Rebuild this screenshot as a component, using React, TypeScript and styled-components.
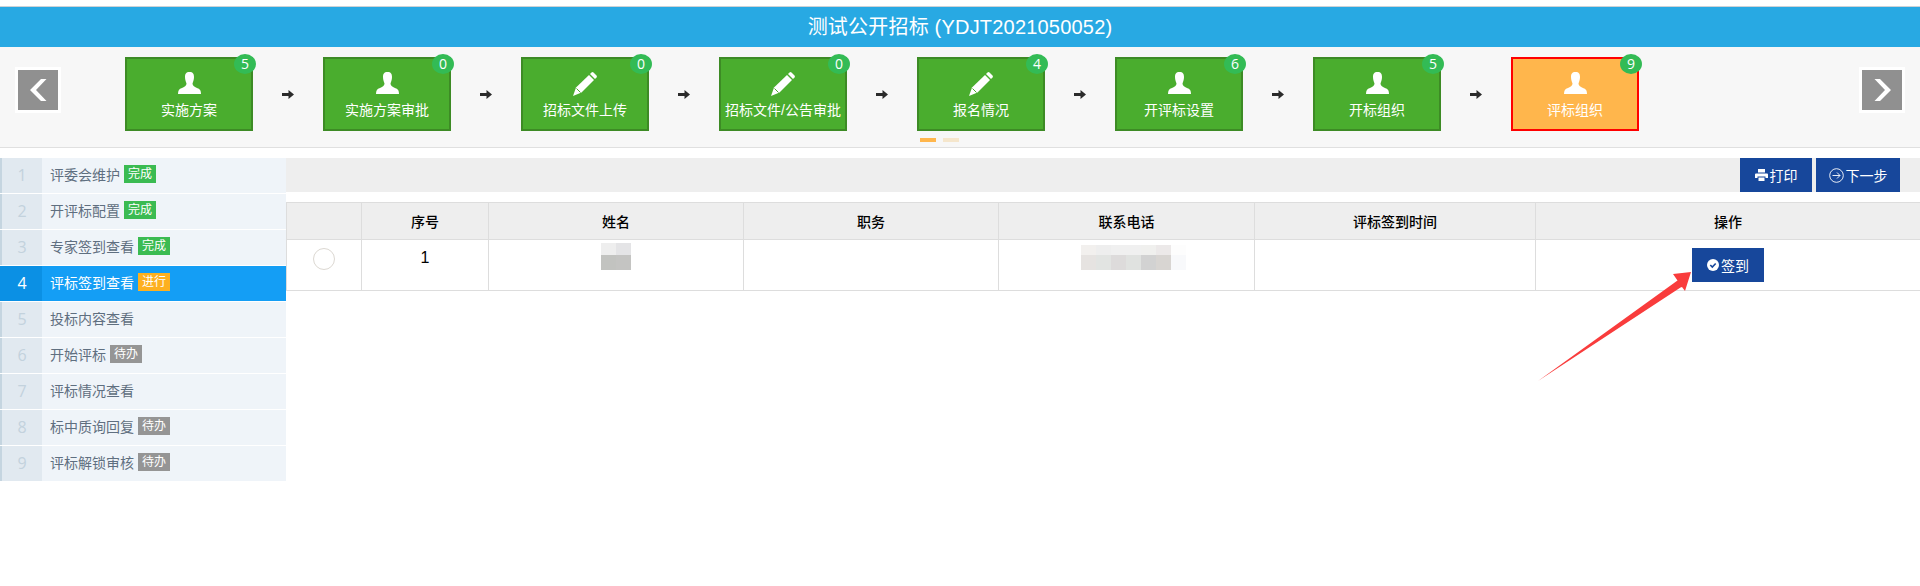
import styled, { createGlobalStyle } from 'styled-components';

const GlobalStyle = createGlobalStyle`
  html, body {
    margin: 0;
    padding: 0;
    background: #fff;
    font-family: "Liberation Sans", "Noto Sans CJK SC", sans-serif;
    font-size: 14px;
    color: #000;
  }
`;

const steps = [
  { name: '实施方案', count: 5, icon: 'user' },
  { name: '实施方案审批', count: 0, icon: 'user' },
  { name: '招标文件上传', count: 0, icon: 'pencil' },
  { name: '招标文件/公告审批', count: 0, icon: 'pencil' },
  { name: '报名情况', count: 4, icon: 'pencil' },
  { name: '开评标设置', count: 6, icon: 'user' },
  { name: '开标组织', count: 5, icon: 'user' },
  { name: '评标组织', count: 9, icon: 'user', current: true },
];

const menu = [
  { name: '评委会维护', tag: '完成', state: 'done' },
  { name: '开评标配置', tag: '完成', state: 'done' },
  { name: '专家签到查看', tag: '完成', state: 'done' },
  { name: '评标签到查看', tag: '进行', state: 'doing', active: true },
  { name: '投标内容查看' },
  { name: '开始评标', tag: '待办', state: 'todo' },
  { name: '评标情况查看' },
  { name: '标中质询回复', tag: '待办', state: 'todo' },
  { name: '评标解锁审核', tag: '待办', state: 'todo' },
];

const tagColors = { done: '#3bbb52', doing: '#fdb01f', todo: '#959595' };

const columns = [
  { title: '', width: 75 },
  { title: '序号', width: 127 },
  { title: '姓名', width: 255 },
  { title: '职务', width: 255 },
  { title: '联系电话', width: 256 },
  { title: '评标签到时间', width: 281 },
  { title: '操作', width: 385 },
];

const nameBlur = ['#eeeeee', '#e4e4e6', '#c2c3c0', '#c4c4c2'];
const phoneBlur = [
  '#f2f0ee', '#eeeeee', '#f0f0f0', '#f0f0f0', '#f0f0ee', '#ece9e9', '#fdfdfd',
  '#e6e3e1', '#e2e4e2', '#dddbdb', '#e0e2e0', '#d2d2d2', '#d8d5d2', '#f8f9fb',
];

const UserIcon = () => (
  <svg width="23" height="22" viewBox="0 0 23 22">
    <path
      fill="#fff"
      d="M11.5 0C8 0 7 2 7 5c0 3 1 5 1.5 6.5 0 2-1.5 3-4.5 4.500C1 17 0 18.500 0 22h23c0-3.500-1-5-4-6-3-1.500-4.500-2.500-4.500-4.500C15 10 16 8 16 5c0-3-1-5-4.500-5z"
    />
  </svg>
);

const PencilIcon = () => (
  <svg width="24" height="24" viewBox="0 0 24 24">
    <path fill="#fff" d="M0 24l3-8.500L16 3l5 5L8.500 20.500z" />
    <path fill="#fff" d="M17 2l1.500-1.500q1-.8 2 0l3 3q.8 1 0 2L22 7z" />
    <path stroke="#4aad2e" strokeWidth="1" fill="none" d="M3.500 16.500l4 4" />
  </svg>
);

const SmallArrow = () => (
  <svg width="12" height="9" viewBox="0 0 12 9">
    <path fill="#2b2b2b" d="M0 3h6.500V0L12 4.500 6.500 9V6H0z" />
  </svg>
);

const LeftChevron = () => (
  <svg width="17" height="22" viewBox="0 0 17 22">
    <path fill="#fff" d="M0 11L11 0h5.500L6 11l10.500 11H11z" />
  </svg>
);

const RightChevron = () => (
  <svg width="17" height="22" viewBox="0 0 17 22">
    <path fill="#fff" d="M17 11L6 0H.5L11 11 .5 22H6z" />
  </svg>
);

const PrintIcon = () => (
  <svg width="13" height="12" viewBox="0 0 13 12">
    <path fill="#fff" d="M3 0h7v3.500H3zM1 4.500h11q1 0 1 1V9h-2.500V7.500h-8V9H0V5.500q0-1 1-1zM3.500 8.500h6V12h-6z" />
  </svg>
);

const NextIcon = () => (
  <svg width="15" height="15" viewBox="0 0 15 15" fill="none" stroke="#fff">
    <circle cx="7.500" cy="7.500" r="6.800" strokeWidth="0.900" />
    <path d="M3.500 7.500h7.500M8 4.500l3 3-3 3" strokeWidth="0.900" />
  </svg>
);

const CheckIcon = () => (
  <svg width="12" height="12" viewBox="0 0 12 12">
    <circle cx="6" cy="6" r="6" fill="#fff" />
    <path d="M3.300 6l2 2 3.400-3.500" fill="none" stroke="#17479b" strokeWidth="1.600" />
  </svg>
);

const App = () => {
  return (
    <>
      <GlobalStyle />
      <Page>
        <Title>测试公开招标 (YDJT2021050052)</Title>
        <StepBand>
          <SlideButton>
            <LeftChevron />
          </SlideButton>
          <StepTrack>
            {steps.map((step, i) => (
              <StepItem key={step.name}>
                <StepBox $current={step.current}>
                  <Badge>{step.count}</Badge>
                  <StepIcon>
                    {step.icon === 'user' ? <UserIcon /> : <PencilIcon />}
                  </StepIcon>
                  <StepName>{step.name}</StepName>
                </StepBox>
                {i < steps.length - 1 && (
                  <Connector>
                    <SmallArrow />
                  </Connector>
                )}
              </StepItem>
            ))}
          </StepTrack>
          <SlideButton $right>
            <RightChevron />
          </SlideButton>
          <Dots>
            <Dot $on />
            <Dot />
          </Dots>
        </StepBand>
        <Body>
          <SideMenu>
            {menu.map((item, i) => (
              <MenuRow key={item.name} $active={item.active}>
                <MenuNo $active={item.active}>{i + 1}</MenuNo>
                <MenuText $active={item.active}>{item.name}</MenuText>
                {item.tag && <Tag $color={tagColors[item.state]}>{item.tag}</Tag>}
              </MenuRow>
            ))}
          </SideMenu>
          <Main>
            <Toolbar>
              <ActionButton $w={72}>
                <PrintIcon />
                打印
              </ActionButton>
              <ActionButton $w={84}>
                <NextIcon />
                下一步
              </ActionButton>
            </Toolbar>
            <Grid>
              <colgroup>
                {columns.map((col, i) => (
                  <GridCol key={i} $w={col.width} />
                ))}
              </colgroup>
              <thead>
                <tr>
                  {columns.map((col, i) => (
                    <HeadCell key={i}>{col.title}</HeadCell>
                  ))}
                </tr>
              </thead>
              <tbody>
                <tr>
                  <Cell>
                    <Radio />
                  </Cell>
                  <Cell>1</Cell>
                  <Cell>
                    <Blur $cols={2} $first={12}>
                      {nameBlur.map((c, i) => (
                        <BlurCell key={i} $c={c} />
                      ))}
                    </Blur>
                  </Cell>
                  <Cell />
                  <Cell>
                    <Blur $cols={7} $first={10} $shift={13}>
                      {phoneBlur.map((c, i) => (
                        <BlurCell key={i} $c={c} />
                      ))}
                    </Blur>
                  </Cell>
                  <Cell />
                  <Cell>
                    <ActionButton $w={72}>
                      <CheckIcon />
                      签到
                    </ActionButton>
                  </Cell>
                </tr>
              </tbody>
            </Grid>
          </Main>
        </Body>
        <PointerArrow viewBox="0 0 170 125" width="170" height="125">
          <path
            fill="#f93c3c"
            d="M161 7L143 9 147.500 15.500 8 116 150.500 22.500 152 22 155 26z"
          />
        </PointerArrow>
      </Page>
    </>
  );
};

const Page = styled.div`
  position: relative;
  width: 1920px;
  height: 586px;
  padding-top: 6px;
  box-sizing: border-box;
  overflow: hidden;
`;

const Title = styled.div`
  height: 40px;
  line-height: 40px;
  border-top: 1px solid #ccd2d6;
  background-color: #28a9e3;
  color: #fff;
  font-size: 20px;
  letter-spacing: 0.2px;
  text-align: center;
`;

const StepBand = styled.div`
  position: relative;
  display: flex;
  align-items: flex-start;
  height: 90px;
  padding: 10px 15px 0;
  background-color: #f7f7f7;
  border-bottom: 1px solid #e0e0e0;
`;

const SlideButton = styled.div<{ $right?: boolean }>`
  display: flex;
  align-items: center;
  justify-content: center;
  width: 40px;
  height: 40px;
  margin-top: 10px;
  margin-left: ${(p) => (p.$right ? 'auto' : '0')};
  background-color: #909090;
  border: 3px solid #fff;
`;

const StepTrack = styled.div`
  display: flex;
  margin-left: 64px;
`;

const StepItem = styled.div`
  display: flex;
`;

const StepBox = styled.div<{ $current?: boolean }>`
  position: relative;
  box-sizing: border-box;
  width: 128px;
  height: 74px;
  padding-top: 13px;
  background-color: ${(p) => (p.$current ? '#ffb64c' : '#4aad2e')};
  border: 2px solid ${(p) => (p.$current ? '#ff0000' : '#3d8b25')};
  text-align: center;
`;

const Badge = styled.span`
  position: absolute;
  top: -5px;
  right: -5px;
  width: 22px;
  height: 20px;
  line-height: 20px;
  border-radius: 50%;
  background-color: #33bb55;
  color: #fff;
  font-family: "Open Sans", sans-serif;
  font-size: 14px;
`;

const StepIcon = styled.div`
  display: flex;
  align-items: flex-start;
  justify-content: center;
  height: 24px;
`;

const StepName = styled.div`
  margin-top: 4px;
  line-height: 20px;
  color: #fff;
  font-size: 14px;
  white-space: nowrap;
`;

const Connector = styled.div`
  display: flex;
  align-items: center;
  justify-content: center;
  width: 70px;
  height: 75px;
`;

const Dots = styled.div`
  position: absolute;
  top: 91px;
  left: 920px;
  display: flex;
  gap: 7px;
`;

const Dot = styled.span<{ $on?: boolean }>`
  width: 16px;
  height: 4px;
  background-color: ${(p) => (p.$on ? '#ffb64c' : '#f5e6cc')};
`;

const Body = styled.div`
  display: flex;
  margin-top: 10px;
`;

const SideMenu = styled.div`
  width: 286px;
  flex-shrink: 0;
`;

const MenuRow = styled.div<{ $active?: boolean }>`
  display: flex;
  align-items: center;
  height: 35px;
  margin-bottom: 1px;
  background-color: ${(p) => (p.$active ? '#149ef5' : '#eff4f9')};
`;

const MenuNo = styled.div<{ $active?: boolean }>`
  box-sizing: border-box;
  width: 42px;
  height: 35px;
  line-height: 35px;
  border-left: 2px solid ${(p) => (p.$active ? '#0b90e4' : '#c5d5e0')};
  background-color: ${(p) => (p.$active ? '#0b90e4' : '#e1e9f0')};
  color: ${(p) => (p.$active ? '#fff' : '#c3d2dd')};
  font-family: "Open Sans", sans-serif;
  font-size: 16px;
  text-align: center;
`;

const MenuText = styled.span<{ $active?: boolean }>`
  margin: -3px 0 0 8px;
  color: ${(p) => (p.$active ? '#fff' : '#5f6f80')};
  font-size: 14px;
`;

const Tag = styled.span<{ $color: string }>`
  width: 32px;
  height: 18px;
  line-height: 18px;
  margin: -3px 0 0 4px;
  background-color: ${(p) => p.$color};
  color: #fff;
  font-size: 12px;
  text-align: center;
`;

const Main = styled.div`
  flex: 1;
  min-width: 0;
`;

const Toolbar = styled.div`
  display: flex;
  justify-content: flex-end;
  gap: 4px;
  height: 34px;
  padding-right: 20px;
  background-color: #eeeeee;
`;

const ActionButton = styled.button<{ $w: number }>`
  display: inline-flex;
  align-items: center;
  justify-content: center;
  gap: 2px;
  box-sizing: border-box;
  width: ${(p) => p.$w}px;
  height: 34px;
  padding: 0;
  border: 0;
  background-color: #17479b;
  color: #fff;
  font-family: inherit;
  font-size: 14px;
`;

const Grid = styled.table`
  width: 1634px;
  margin-top: 10px;
  table-layout: fixed;
  border-collapse: collapse;
`;

const GridCol = styled.col<{ $w: number }>`
  width: ${(p) => p.$w}px;
`;

const HeadCell = styled.th`
  height: 36px;
  padding: 0;
  border: 1px solid #dddddd;
  background-color: #eeeeee;
  font-size: 14px;
  font-weight: 500;
  text-align: center;
`;

const Cell = styled.td`
  height: 50px;
  box-sizing: border-box;
  padding: 8px 0;
  border: 1px solid #dddddd;
  font-size: 16px;
  line-height: 20px;
  text-align: center;
  vertical-align: top;
`;

const Radio = styled.span`
  display: block;
  box-sizing: border-box;
  width: 22px;
  height: 22px;
  margin: 0 auto;
  border: 1px solid #dcd8d2;
  border-radius: 50%;
`;

const Blur = styled.div<{ $cols: number; $first: number; $shift?: number }>`
  display: grid;
  grid-template-columns: repeat(${(p) => p.$cols}, 15px);
  grid-template-rows: ${(p) => p.$first}px 15px;
  justify-content: center;
  margin-top: ${(p) => 7 - p.$first}px;
  padding-left: ${(p) => p.$shift || 0}px;
`;

const BlurCell = styled.span<{ $c: string }>`
  background-color: ${(p) => p.$c};
`;

const PointerArrow = styled.svg`
  position: absolute;
  left: 1530px;
  top: 265px;
`;

export default App;
